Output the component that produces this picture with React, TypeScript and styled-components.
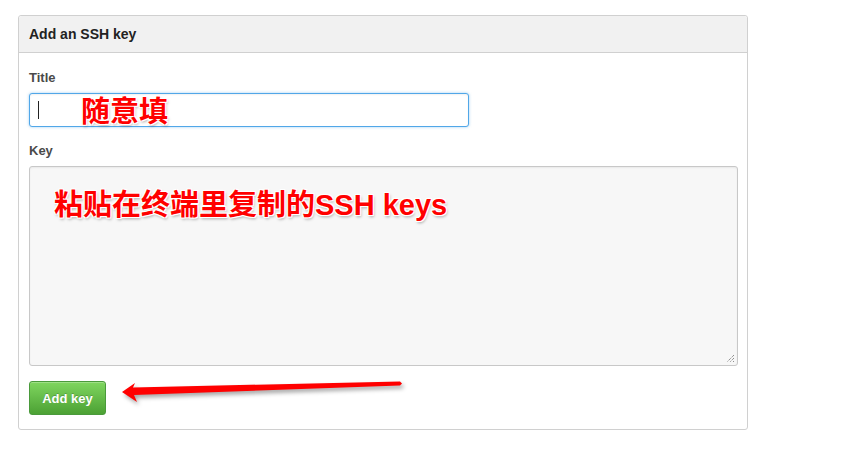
import React from 'react';
import styled, { createGlobalStyle } from 'styled-components';

const GlobalStyle = createGlobalStyle`
  html, body {
    margin: 0;
    padding: 0;
    background: #fff;
  }
  body {
    font-family: "Liberation Sans", Arial, sans-serif;
    color: #333;
  }
`;

const Page = styled.div`
  padding: 15px 0 0 18px;
  position: relative;
`;

const Panel = styled.div`
  width: 728px;
  border: 1px solid #d0d0d0;
  border-radius: 3px;
  background: #fff;
`;

const PanelHeader = styled.div`
  height: 36px;
  display: flex;
  align-items: center;
  padding: 0 10px;
  background: #f1f1f1;
  border-bottom: 1px solid #d0d0d0;
  border-radius: 3px 3px 0 0;
  font-size: 14px;
  font-weight: bold;
  color: #222;
`;

const PanelBody = styled.div`
  position: relative;
  padding: 16px 10px 14px;
  display: flex;
  flex-direction: column;
  align-items: flex-start;
`;

const Label = styled.label<{ gap: number }>`
  display: block;
  font-size: 13px;
  line-height: 18px;
  font-weight: bold;
  color: #4a4a4a;
  margin-bottom: ${p => p.gap}px;
`;

const Field = styled.div<{ gap: number }>`
  position: relative;
  margin-bottom: ${p => p.gap}px;
`;

const TitleInput = styled.div`
  width: 440px;
  height: 34px;
  box-sizing: border-box;
  border: 1px solid #51a7e8;
  border-radius: 3px;
  box-shadow: 0 0 3px rgba(81, 167, 232, 0.55), inset 0 1px 2px rgba(0, 0, 0, 0.06);
  background: #fff;
  display: flex;
  align-items: center;
  padding-left: 8px;
`;

const Caret = styled.span`
  width: 1px;
  height: 18px;
  background: #222;
`;

const KeyArea = styled.div`
  position: relative;
  width: 709px;
  height: 200px;
  box-sizing: border-box;
  border: 1px solid #c8c8c8;
  border-radius: 3px;
  background: #f7f7f7;
  box-shadow: inset 0 1px 2px rgba(0, 0, 0, 0.06);
`;

const Grip = styled.svg`
  position: absolute;
  right: 2px;
  bottom: 2px;
`;

const Note = styled.span<{ left: number; top: number }>`
  position: absolute;
  left: ${p => p.left}px;
  top: ${p => p.top}px;
  font-family: "Liberation Sans", "Noto Sans CJK SC", sans-serif;
  font-size: 29px;
  line-height: 32px;
  font-weight: bold;
  color: #ff0000;
  white-space: nowrap;
  text-shadow:
    -1px -1px 0 #fff, 1px -1px 0 #fff, -1px 1px 0 #fff, 1px 1px 0 #fff,
    0 0 3px #fff, 1px 2px 3px rgba(0, 0, 0, 0.35);
`;

const AddButton = styled.button`
  width: 77px;
  height: 34px;
  border: 1px solid #4a9a3b;
  border-radius: 3px;
  background: linear-gradient(#7fd65f, #4ca134);
  color: #fff;
  font-family: "Liberation Sans", Arial, sans-serif;
  font-size: 13px;
  font-weight: bold;
  text-shadow: 0 -1px 0 rgba(0, 0, 0, 0.2);
  box-shadow: inset 0 1px 0 rgba(255, 255, 255, 0.25);
  padding: 0;
`;

const Arrow = styled.svg`
  position: absolute;
  left: 0;
  top: 0;
  overflow: visible;
  pointer-events: none;
  filter: drop-shadow(2px 3px 2px rgba(0, 0, 0, 0.35));
`;

export default function App() {
  return (
    <>
      <GlobalStyle />
      <Page>
        <Panel>
          <PanelHeader>Add an SSH key</PanelHeader>
          <PanelBody>
            <Label gap={6}>Title</Label>
            <Field gap={15}>
              <TitleInput>
                <Caret />
              </TitleInput>
              <Note left={52} top={3}>随意填</Note>
            </Field>
            <Label gap={6}>Key</Label>
            <Field gap={15}>
              <KeyArea>
                <Grip width="10" height="10" viewBox="0 0 10 10">
                  <path d="M9 2 L2 9 M9 5 L5 9 M9 8 L8 9" stroke="#666" strokeWidth="1" strokeDasharray="1 1" />
                </Grip>
              </KeyArea>
              <Note left={25} top={23}>粘贴在终端里复制的SSH keys</Note>
            </Field>
            <AddButton>Add key</AddButton>
          </PanelBody>
        </Panel>
        <Arrow width="848" height="469">
          <polygon
            fill="#ff0000"
            points="122,392 135,383 133,387.5 400,381.5 402,383.5 400,385.5 134,395 137,402"
          />
        </Arrow>
      </Page>
    </>
  );
}
